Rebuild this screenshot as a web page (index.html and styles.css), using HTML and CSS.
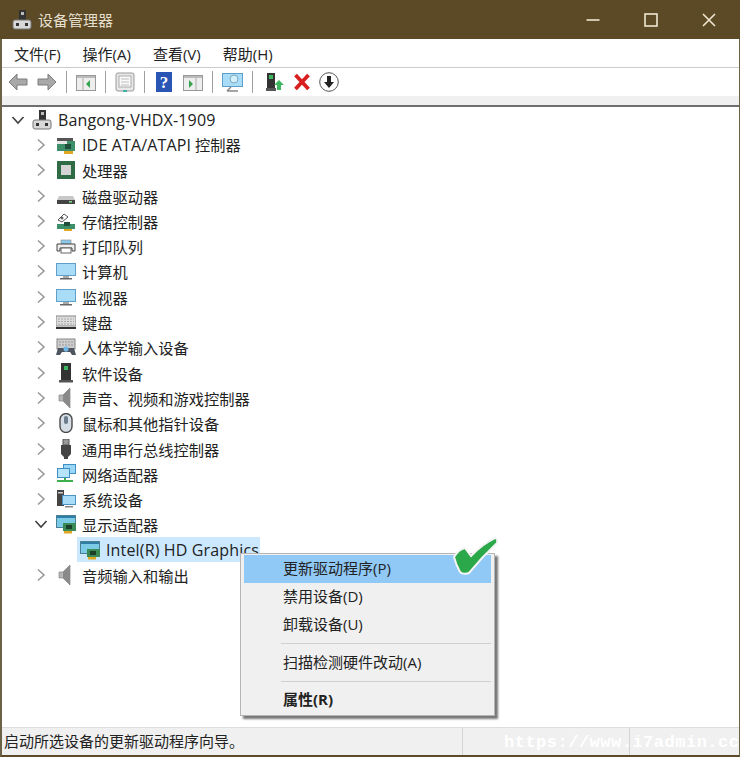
FILE: index.html
```html
<!doctype html>
<html>
<head>
 <title>设备管理器</title>
 <meta charset="utf-8">
 <link rel="stylesheet" href="styles.css">
</head>
<body>
<svg class="defs" width="0" height="0">
 <defs>
  <symbol id="i-pc" viewBox="0 0 20 20">
   <rect x="7" y="0" width="7" height="10" fill="#333"/>
   <rect x="9" y="2" width="3" height="3" fill="#bbb"/>
   <rect x="1" y="10" width="18" height="9" rx="2" fill="#d8d8d8" stroke="#777"/>
   <rect x="4" y="13" width="3" height="3" fill="#333"/>
   <rect x="13" y="13" width="3" height="3" fill="#333"/>
  </symbol>
  <symbol id="i-ide" viewBox="0 0 20 20">
   <path d="M1 3h16v3H1z" fill="#555"/>
   <path d="M1 6h18v10H1z" fill="#3d8f6a"/>
   <path d="M1 6h10v3H1z" fill="#e8e8e8"/>
   <rect x="9" y="9" width="6" height="5" fill="#1f4f3a"/>
   <rect x="8" y="16" width="9" height="3" fill="#e0a820"/>
  </symbol>
  <symbol id="i-cpu" viewBox="0 0 20 20">
   <rect x="1" y="1" width="18" height="18" fill="#2f6b45"/>
   <rect x="5" y="5" width="10" height="10" fill="#d4d4d4"/>
  </symbol>
  <symbol id="i-disk" viewBox="0 0 20 20">
   <path d="M3 10h14l2 4H1z" fill="#c8c8c8"/>
   <rect x="1" y="14" width="18" height="4" fill="#444"/>
   <rect x="13" y="15" width="3" height="1.5" fill="#8d8"/>
  </symbol>
  <symbol id="i-store" viewBox="0 0 20 20">
   <path d="M2 9l6-6 4 3-6 5z" fill="#fff" stroke="#555"/>
   <circle cx="6" cy="7" r="1.5" fill="#666"/>
   <path d="M1 13h18v5H1z" fill="#3d8f6a"/>
   <rect x="8" y="11" width="6" height="4" fill="#1f4f3a"/>
   <rect x="8" y="18" width="8" height="2" fill="#e0a820"/>
  </symbol>
  <symbol id="i-print" viewBox="0 0 20 20">
   <rect x="5" y="4" width="10" height="4" fill="#8cc8ea" stroke="#888" stroke-width=".6"/>
   <path d="M1 8h18v7h-3v-3H4v3H1z" fill="#eee" stroke="#444"/>
   <rect x="5" y="12" width="10" height="5" fill="#fff" stroke="#666"/>
  </symbol>
  <symbol id="i-monitor" viewBox="0 0 20 20">
   <rect x="0" y="2" width="20" height="13" fill="#5f9fc9"/>
   <rect x="1" y="3" width="18" height="11" fill="#a9dcf7"/>
   <rect x="7" y="15" width="6" height="2" fill="#aaa"/>
   <rect x="4" y="17" width="12" height="1.5" fill="#666"/>
  </symbol>
  <symbol id="i-kbd" viewBox="0 0 20 20">
   <rect x="0" y="4" width="20" height="10" fill="#ddd" stroke="#888"/>
   <path d="M2 7h16M2 9.5h16M2 12h16" stroke="#aaa" stroke-dasharray="2 1"/>
   <rect x="0" y="15" width="20" height="2" fill="#333"/>
  </symbol>
  <symbol id="i-hid" viewBox="0 0 20 20">
   <rect x="1" y="2" width="18" height="10" fill="#ccc" stroke="#888"/>
   <path d="M3 5h14M3 8h14" stroke="#999" stroke-dasharray="2 1"/>
   <path d="M0 18l2-7h6l2 4 2-4h6l2 7h-4l-2-3H6l-2 3z" fill="#4d5660"/>
   <circle cx="10" cy="12" r="2.5" fill="#6cb6e8"/>
  </symbol>
  <symbol id="i-soft" viewBox="0 0 20 20">
   <rect x="5" y="0" width="10" height="17" fill="#333"/>
   <rect x="8" y="3" width="4" height="4" fill="#3eb55f"/>
   <rect x="3" y="17" width="14" height="2.5" fill="#555"/>
  </symbol>
  <symbol id="i-sound" viewBox="0 0 20 20">
   <path d="M3 7h4l7-7v20l-7-7H3z" fill="#b5b5b5" stroke="#888" stroke-width=".7"/>
   <path d="M7 7l7-7v20l-7-7z" fill="#8a8a8a"/>
  </symbol>
  <symbol id="i-mouse" viewBox="0 0 20 20">
   <rect x="4" y="0.5" width="12" height="19" rx="6" fill="#d5dde6" stroke="#4a4a4a" stroke-width="1.4"/>
   <rect x="8" y="3" width="4" height="8" rx="2" fill="#6d7c8c"/>
  </symbol>
  <symbol id="i-usb" viewBox="0 0 20 20">
   <rect x="7" y="0" width="6" height="6" fill="#999" stroke="#555"/>
   <path d="M5 6h10v9l-3 3v2H8v-2l-3-3z" fill="#444"/>
  </symbol>
  <symbol id="i-net" viewBox="0 0 20 20">
   <rect x="7" y="0" width="13" height="10" fill="#3d8fc5"/>
   <rect x="8" y="1" width="11" height="8" fill="#9bd6f5"/>
   <rect x="1" y="4" width="13" height="10" fill="#3d8fc5"/>
   <rect x="2" y="5" width="11" height="8" fill="#b5e4fa"/>
   <path d="M1 17h16M9 14v3" stroke="#3fae4c" stroke-width="2"/>
  </symbol>
  <symbol id="i-sys" viewBox="0 0 20 20">
   <rect x="1" y="1" width="7" height="16" fill="#444"/>
   <rect x="2" y="3" width="5" height="1.5" fill="#ccc"/>
   <rect x="6" y="6" width="14" height="10" fill="#4a93c5"/>
   <rect x="7" y="7" width="12" height="8" fill="#a9dcf7"/>
   <rect x="9" y="17" width="8" height="1.5" fill="#888"/>
  </symbol>
  <symbol id="i-display" viewBox="0 0 20 20">
   <rect x="0" y="1" width="20" height="13" fill="#4c7f96"/>
   <rect x="1" y="2" width="18" height="11" fill="#7ccbe6"/>
   <path d="M1 2h18v2H1z" fill="#2e7ea6"/>
   <rect x="7" y="9" width="13" height="8" fill="#3a8a56"/>
   <rect x="10" y="11" width="6" height="4" fill="#1c3f2a"/>
   <rect x="8" y="17" width="8" height="2.5" fill="#e0a820"/>
  </symbol>
  <symbol id="c-right" viewBox="0 0 10 14">
   <path d="M2 1.5L8 7l-6 5.5" fill="none" stroke="#9a9a9a" stroke-width="1.6"/>
  </symbol>
  <symbol id="c-down" viewBox="0 0 14 10">
   <path d="M1.5 2L7 8l5.5-6" fill="none" stroke="#404040" stroke-width="1.6"/>
  </symbol>
 </defs>
</svg>

<div class="window">
 <div class="titlebar">
  <svg class="title-icon" width="20" height="20"><use href="#i-pc"/></svg>
  <span class="title-text">设备管理器</span>
  <div class="winbtns">
   <svg width="16" height="16" viewBox="0 0 16 16"><path d="M1.5 8h13" stroke="#efe6d2" stroke-width="1.6"/></svg>
   <svg width="16" height="16" viewBox="0 0 16 16"><rect x="2" y="2" width="12" height="12" fill="none" stroke="#efe6d2" stroke-width="1.6"/></svg>
   <svg width="16" height="16" viewBox="0 0 16 16"><path d="M2 2l12 12M14 2L2 14" stroke="#efe6d2" stroke-width="1.6"/></svg>
  </div>
 </div>

 <div class="menubar">
  <span>文件(F)</span><span>操作(A)</span><span>查看(V)</span><span>帮助(H)</span>
 </div>

 <div class="toolbar">
  <svg width="20" height="20" viewBox="0 0 20 20"><path d="M1 10l8-8v5h10v6H9v5z" fill="#a8a8a8" stroke="#7d7d7d"/></svg>
  <svg width="20" height="20" viewBox="0 0 20 20"><path d="M19 10l-8-8v5H1v6h10v5z" fill="#a8a8a8" stroke="#7d7d7d"/></svg>
  <i class="sep"></i>
  <svg width="20" height="20" viewBox="0 0 20 20"><rect x=".5" y="3.5" width="19" height="15" fill="#eee" stroke="#999"/><path d="M1 4h18v2H1z" fill="#bbb"/><path d="M7 6v12" stroke="#aaa"/><path d="M14 8v8l-4-4z" fill="#36a44f"/></svg>
  <i class="sep"></i>
  <svg width="20" height="20" viewBox="0 0 20 20"><rect x="1" y="1" width="18" height="18" rx="2" fill="#e8e8e8" stroke="#999"/><rect x="4" y="4" width="12" height="11" fill="#fafafa" stroke="#aaa"/><path d="M6 7h8M6 10h8M6 13h8" stroke="#bbb"/><path d="M8 19h4" stroke="#3fb0a0" stroke-width="2"/></svg>
  <i class="sep"></i>
  <svg width="20" height="20" viewBox="0 0 20 20"><rect x="2" y="0" width="16" height="20" fill="#2a55b5"/><text x="10" y="15.5" class="help-q">?</text></svg>
  <svg width="20" height="20" viewBox="0 0 20 20"><rect x=".5" y="3.5" width="19" height="15" fill="#eee" stroke="#999"/><path d="M1 4h18v2H1z" fill="#bbb"/><path d="M13 6v12" stroke="#aaa"/><path d="M6 8v8l4-4z" fill="#36a44f"/></svg>
  <i class="sep"></i>
  <svg width="21" height="20" viewBox="0 0 21 20"><rect x=".5" y="1.5" width="20" height="13" fill="#a9dcf7" stroke="#5f9fc9"/><circle cx="12" cy="7" r="4" fill="#d5eefb" stroke="#7ab"/><path d="M9 15l-4 4M5 19h11" stroke="#888" stroke-width="1.5"/></svg>
  <i class="sep"></i>
  <svg class="tool-dev" width="20" height="20" viewBox="0 0 20 20"><rect x="2" y="1" width="8" height="15" fill="#333"/><rect x="4" y="3" width="4" height="4" fill="#3eb55f"/><rect x="1" y="16" width="10" height="3" fill="#555"/><path d="M14 8l5 5h-3v5h-4v-5H9z" fill="#3eb55f"/></svg>
  <svg width="16" height="20" viewBox="0 0 16 20"><path d="M1.5 3l13 14M14.5 3L1.5 17" stroke="#d81e1e" stroke-width="3.8"/></svg>
  <svg class="tool-down" width="20" height="20" viewBox="0 0 20 20"><circle cx="10" cy="10" r="9.3" fill="#fff" stroke="#555"/><path d="M8 4h4v6h3l-5 6-5-6h3z" fill="#222"/></svg>
 </div>
 <div class="toolband"></div>

 <div class="tree">
  <div class="row root"><svg class="chev-d" width="14" height="10"><use href="#c-down"/></svg><svg class="ico" width="20" height="20"><use href="#i-pc"/></svg><span class="lat">Bangong-VHDX-1909</span></div>
  <div class="row"><svg class="chev" width="10" height="14"><use href="#c-right"/></svg><svg class="ico" width="20" height="20"><use href="#i-ide"/></svg><span><span class="lat">IDE ATA/ATAPI</span> 控制器</span></div>
  <div class="row"><svg class="chev" width="10" height="14"><use href="#c-right"/></svg><svg class="ico" width="20" height="20"><use href="#i-cpu"/></svg><span>处理器</span></div>
  <div class="row"><svg class="chev" width="10" height="14"><use href="#c-right"/></svg><svg class="ico" width="20" height="20"><use href="#i-disk"/></svg><span>磁盘驱动器</span></div>
  <div class="row"><svg class="chev" width="10" height="14"><use href="#c-right"/></svg><svg class="ico" width="20" height="20"><use href="#i-store"/></svg><span>存储控制器</span></div>
  <div class="row"><svg class="chev" width="10" height="14"><use href="#c-right"/></svg><svg class="ico" width="20" height="20"><use href="#i-print"/></svg><span>打印队列</span></div>
  <div class="row"><svg class="chev" width="10" height="14"><use href="#c-right"/></svg><svg class="ico" width="20" height="20"><use href="#i-monitor"/></svg><span>计算机</span></div>
  <div class="row"><svg class="chev" width="10" height="14"><use href="#c-right"/></svg><svg class="ico" width="20" height="20"><use href="#i-monitor"/></svg><span>监视器</span></div>
  <div class="row"><svg class="chev" width="10" height="14"><use href="#c-right"/></svg><svg class="ico" width="20" height="20"><use href="#i-kbd"/></svg><span>键盘</span></div>
  <div class="row"><svg class="chev" width="10" height="14"><use href="#c-right"/></svg><svg class="ico" width="20" height="20"><use href="#i-hid"/></svg><span>人体学输入设备</span></div>
  <div class="row"><svg class="chev" width="10" height="14"><use href="#c-right"/></svg><svg class="ico" width="20" height="20"><use href="#i-soft"/></svg><span>软件设备</span></div>
  <div class="row"><svg class="chev" width="10" height="14"><use href="#c-right"/></svg><svg class="ico" width="20" height="20"><use href="#i-sound"/></svg><span>声音、视频和游戏控制器</span></div>
  <div class="row"><svg class="chev" width="10" height="14"><use href="#c-right"/></svg><svg class="ico" width="20" height="20"><use href="#i-mouse"/></svg><span>鼠标和其他指针设备</span></div>
  <div class="row"><svg class="chev" width="10" height="14"><use href="#c-right"/></svg><svg class="ico" width="20" height="20"><use href="#i-usb"/></svg><span>通用串行总线控制器</span></div>
  <div class="row"><svg class="chev" width="10" height="14"><use href="#c-right"/></svg><svg class="ico" width="20" height="20"><use href="#i-net"/></svg><span>网络适配器</span></div>
  <div class="row"><svg class="chev" width="10" height="14"><use href="#c-right"/></svg><svg class="ico" width="20" height="20"><use href="#i-sys"/></svg><span>系统设备</span></div>
  <div class="row"><svg class="chev-d" width="14" height="10"><use href="#c-down"/></svg><svg class="ico" width="20" height="20"><use href="#i-display"/></svg><span>显示适配器</span></div>
  <div class="row leaf"><div class="leaf-sel"><svg class="ico" width="20" height="20"><use href="#i-display"/></svg><span class="lat">Intel(R) HD Graphics</span></div></div>
  <div class="row"><svg class="chev" width="10" height="14"><use href="#c-right"/></svg><svg class="ico" width="20" height="20"><use href="#i-sound"/></svg><span>音频输入和输出</span></div>
 </div>

 <div class="statusbar">
  <div class="st-main">启动所选设备的更新驱动程序向导。</div>
  <div class="st-mid"></div>
  <div class="st-end"></div>
 </div>
</div>

<div class="ctx">
 <div class="ctx-item hot">更新驱动程序(P)</div>
 <div class="ctx-item">禁用设备(D)</div>
 <div class="ctx-item">卸载设备(U)</div>
 <div class="ctx-sep"></div>
 <div class="ctx-item">扫描检测硬件改动(A)</div>
 <div class="ctx-sep"></div>
 <div class="ctx-item bold">属性(R)</div>
</div>

<svg class="check" width="52" height="44" viewBox="0 0 52 44">
 <path d="M4 22Q9 14 15 13L21 21Q32 9 45 3Q48 3 47 8Q32 22 19 38Q13 40 10 37Q6 30 4 22Z" fill="#2ba84a" stroke="#f4f4f4" stroke-width="2"/>
</svg>

<div class="watermark">https://www.i7admin.cc</div>
</body>
</html>
```

FILE: styles.css
```css
html, body {
  margin: 0;
  padding: 0;
  width: 740px;
  height: 757px;
  overflow: hidden;
  background: #fff;
  font-family: "Open Sans", "Noto Sans CJK SC", sans-serif;
  font-size: 15px;
  color: #222;
}
.defs {position: absolute}
.window {
  width: 740px;
  height: 757px;
  box-sizing: border-box;
  display: flex;
  flex-direction: column;
  border-left: 2px solid #6b6248;
  border-right: 1px solid #6b6248;
  border-bottom: 2px solid #5b4a25;
}
.titlebar {
  height: 39px;
  flex: none;
  margin-left: -2px;
  margin-right: -1px;
  padding-left: 12px;
  display: flex;
  align-items: center;
  background: #5b4a25;
  color: #e6dfce;
}
.title-icon {margin-right: 6px}
.title-text {font-size: 15px}
.winbtns {
  margin-left: auto;
  margin-right: 23px;
  display: flex;
  gap: 42px;
}
.menubar {
  height: 29px;
  flex: none;
  padding-left: 12px;
  display: flex;
  align-items: center;
  gap: 22px;
  border-bottom: 1px solid #ccc;
  box-sizing: border-box;
  padding-top: 1px;
}
.toolbar {
  height: 28px;
  flex: none;
  padding-left: 6px;
  display: flex;
  align-items: center;
  gap: 9px;
  box-sizing: border-box;
}
.sep {
  width: 1px;
  height: 22px;
  background: #a0a0a0;
}
.tool-dev {margin-left: 3px}
.help-q {
  font-family: "Liberation Serif", serif;
  font-weight: bold;
  font-size: 17px;
  fill: #fff;
  text-anchor: middle;
}
.toolband {
  height: 11px;
  flex: none;
  box-sizing: border-box;
  background: #f0f0f0;
  border-bottom: 2px solid #6e6e6e;
}
.tree {
  flex: 1;
  display: grid;
  grid-auto-rows: 25.3px;
  align-content: start;
  font-size: 15.25px;
}
.lat {font-size: 16px; letter-spacing: .15px}
.row {
  display: flex;
  align-items: center;
  padding-left: 34px;
  white-space: nowrap;
}
.chev {margin-right: 10px}
.chev-d {margin-left: -2px; margin-right: 8px}
.ico {margin-right: 6px; flex: none}
.root {padding-left: 9px}
.root .chev-d {margin-left: 0; margin-right: 7px}
.leaf {padding-left: 75px}
.leaf-sel {
  width: 183px;
  height: 25px;
  padding-left: 3px;
  box-sizing: border-box;
  display: flex;
  align-items: center;
  background: #cce8ff;
  overflow: hidden;
}
.statusbar {
  height: 28px;
  flex: none;
  display: flex;
  background: #f0f0f0;
  border-top: 1px solid #ddd;
  box-sizing: border-box;
}
.st-main {
  width: 458px;
  padding-left: 2px;
  border-right: 1px solid #d4d4d4;
  font-size: 15px;
  line-height: 26px;
  white-space: nowrap;
}
.st-mid {
  width: 166px;
  border-right: 1px solid #d4d4d4;
}
.st-end {flex: 1}

/* context menu, floats over the tree */
.ctx {
  position: absolute;
  left: 240px;
  top: 553px;
  width: 255px;
  height: 163px;
  box-sizing: border-box;
  padding: 1px 3px;
  background: #f0f0f0;
  border: 1px solid #b5b5b5;
  box-shadow: 3px 3px 2px #777;
}
.ctx-item {
  height: 28px;
  line-height: 27px;
  padding-left: 39px;
}
.ctx-item.hot {background: #90c8f6}
.ctx-item.bold {font-weight: bold; line-height: 25px}
.ctx-sep {
  height: 1px;
  margin: 4px 0 5px 37px;
  background: #d0d0d0;
}
.check {
  position: absolute;
  left: 450px;
  top: 535px;
}
.watermark {
  position: absolute;
  left: 504px;
  top: 733px;
  font-family: "Liberation Mono", monospace;
  font-weight: bold;
  font-size: 17px;
  letter-spacing: .5px;
  color: #fff;
  white-space: nowrap;
}
```
